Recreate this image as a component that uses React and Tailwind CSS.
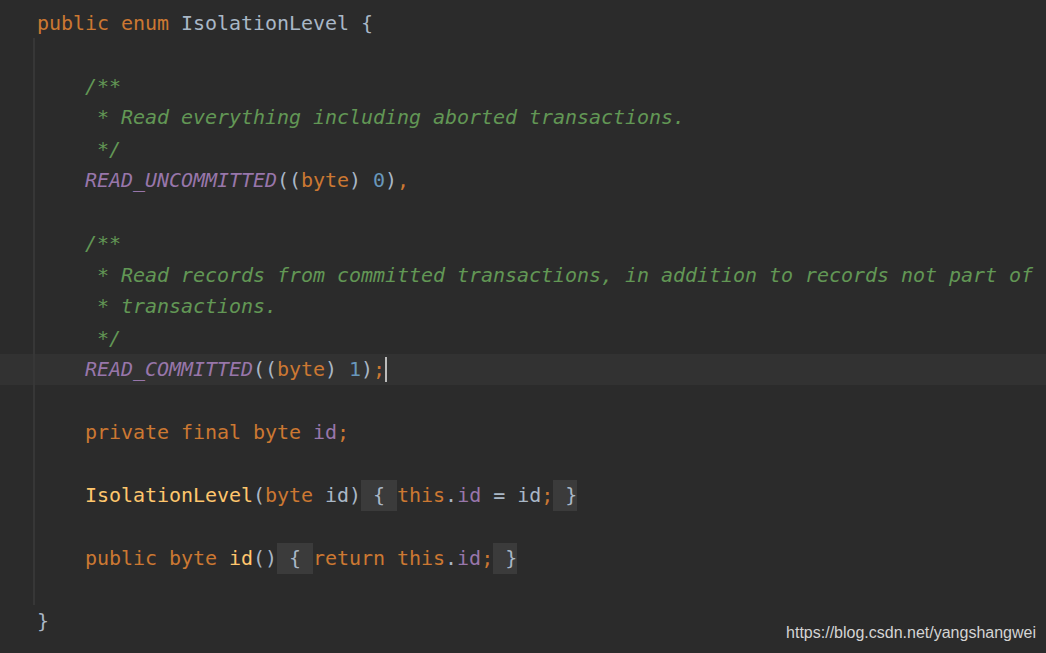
import React from "react";

// Darcula palette
const KW = "text-[#cc7832]";
const TX = "text-[#a9b7c6]";
const CM = "text-[#629755] italic";
const EN = "text-[#9876aa] italic";
const FD = "text-[#9876aa]";
const NM = "text-[#6897bb]";
const FN = "text-[#ffc66d]";

const Line = ({ children, current }) => (
    <div className={"h-[31.5px] flex items-center whitespace-pre pl-[37px] " + (current ? "bg-[#323232]" : "")}>
        {children}
    </div>
);

// folded code block marker
const Fold = ({ text }) => <span className="inline-block bg-[#3b3b3b] text-[#a9b7c6] h-[31px] leading-[31px] whitespace-pre">{text}</span>;

export default function App() {
    return (
        <div className="relative w-[1046px] h-[653px] bg-[#2b2b2b] overflow-hidden"
            style={{ fontFamily: '"DejaVu Sans Mono", "Liberation Mono", monospace' }}>
            <div className="pt-[7px] text-[20px] tracking-[-0.04px]">
                <Line><span className={KW}>public enum </span><span className={TX}>IsolationLevel {"{"}</span></Line>
                <Line />
                <Line><span className={CM}>    /**</span></Line>
                <Line><span className={CM}>     * Read everything including aborted transactions.</span></Line>
                <Line><span className={CM}>     */</span></Line>
                <Line>
                    <span className={EN}>    READ_UNCOMMITTED</span><span className={TX}>((</span><span className={KW}>byte</span>
                    <span className={TX}>) </span><span className={NM}>0</span><span className={TX}>)</span><span className={KW}>,</span>
                </Line>
                <Line />
                <Line><span className={CM}>    /**</span></Line>
                <Line><span className={CM}>     * Read records from committed transactions, in addition to records not part of</span></Line>
                <Line><span className={CM}>     * transactions.</span></Line>
                <Line><span className={CM}>     */</span></Line>
                <Line current>
                    <span className={EN}>    READ_COMMITTED</span><span className={TX}>((</span><span className={KW}>byte</span>
                    <span className={TX}>) </span><span className={NM}>1</span><span className={TX}>)</span><span className={KW}>;</span>
                    <span className="inline-block w-[2px] h-[25px] bg-[#bbbbbb]" />
                </Line>
                <Line />
                <Line><span className={KW}>    private final byte </span><span className={FD}>id</span><span className={KW}>;</span></Line>
                <Line />
                <Line>
                    <span className={FN}>    IsolationLevel</span><span className={TX}>(</span><span className={KW}>byte </span>
                    <span className={TX}>id)</span><Fold text=" { " /><span className={KW}>this</span><span className={TX}>.</span>
                    <span className={FD}>id</span><span className={TX}> = id</span><span className={KW}>;</span><Fold text=" }" />
                </Line>
                <Line />
                <Line>
                    <span className={KW}>    public byte </span><span className={FN}>id</span><span className={TX}>()</span>
                    <Fold text=" { " /><span className={KW}>return this</span><span className={TX}>.</span><span className={FD}>id</span>
                    <span className={KW}>;</span><Fold text=" }" />
                </Line>
                <Line />
                <Line><span className={TX}>{"}"}</span></Line>
            </div>
            {/* indent guide */}
            <div className="absolute left-[33px] top-[38px] w-[2px] h-[567px] bg-[#373737]" />
            <div className="absolute right-[10px] bottom-[8px] text-[16px] text-[#d4d4d4]"
                style={{ fontFamily: '"Liberation Sans", Arial, sans-serif' }}>
                https://blog.csdn.net/yangshangwei
            </div>
        </div>
    );
}
